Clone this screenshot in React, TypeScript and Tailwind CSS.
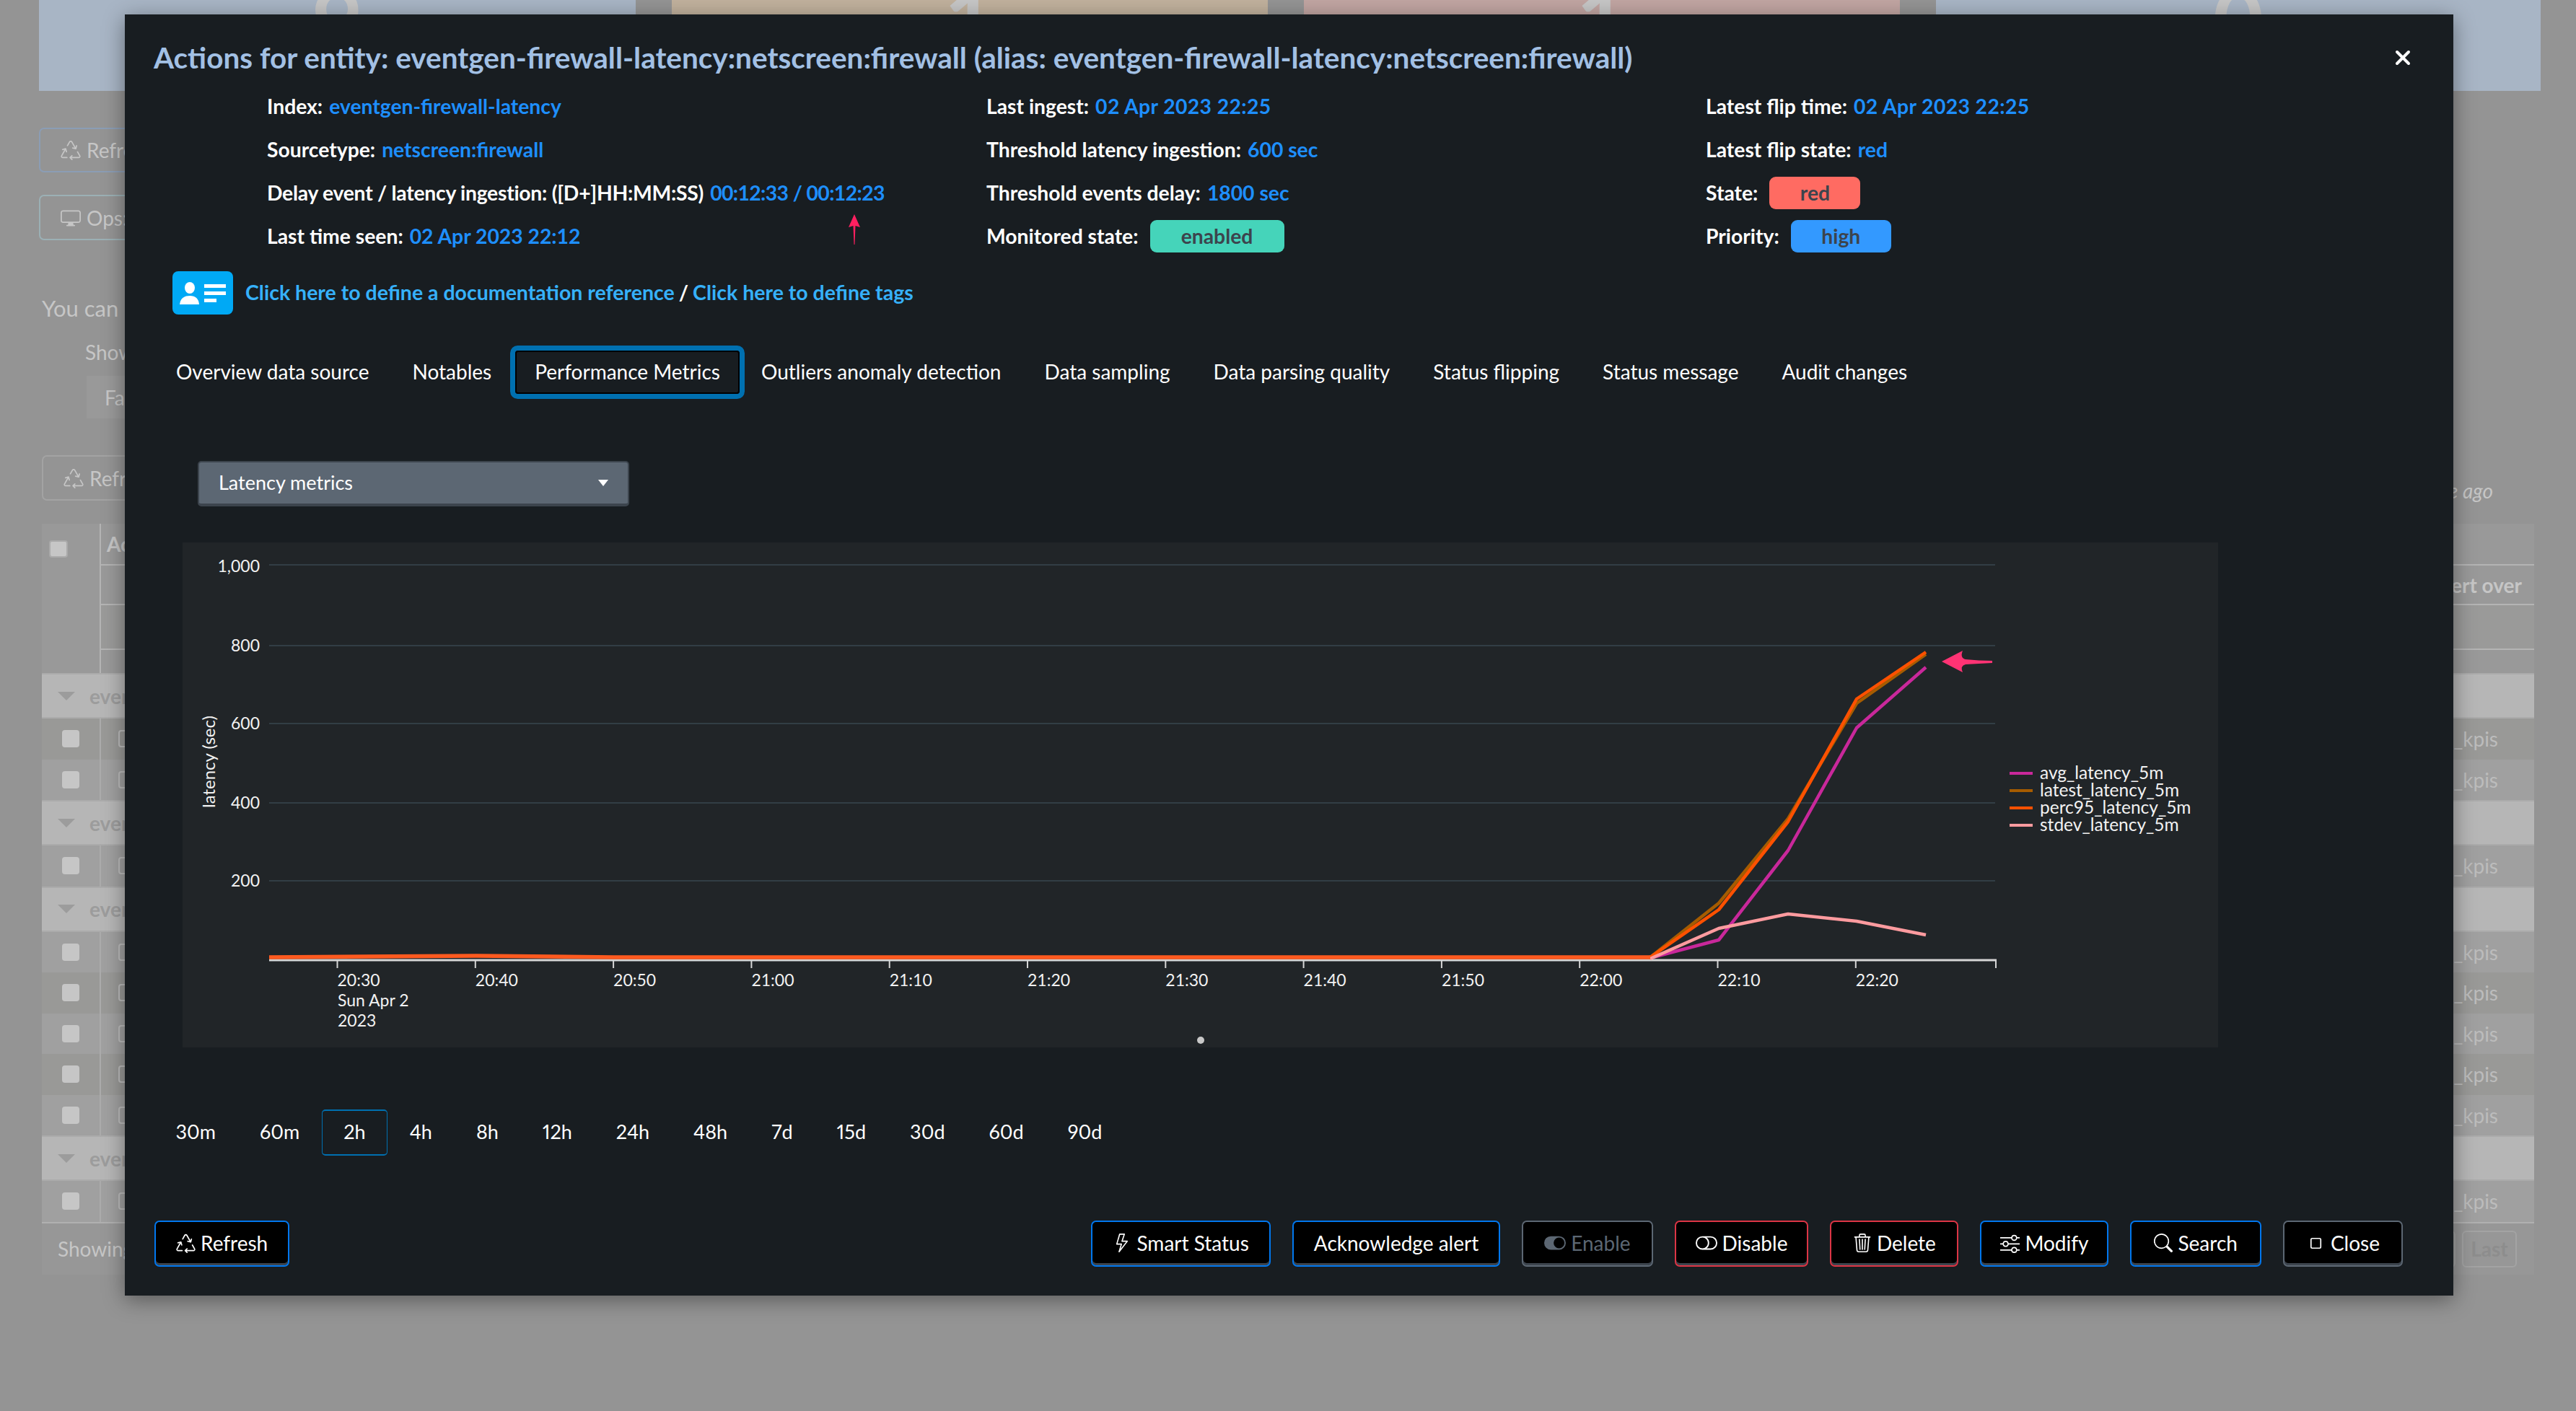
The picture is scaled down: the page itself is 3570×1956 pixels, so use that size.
import type { ReactNode } from "react"
import {
  BsDisplay,
  BsLightning,
  BsRecycle,
  BsSearch,
  BsSliders,
  BsStop,
  BsToggleOff,
  BsToggleOn,
  BsTrash3,
} from "react-icons/bs"
import { X } from "lucide-react"

const tabs = [
  "Overview data source",
  "Notables",
  "Performance Metrics",
  "Outliers anomaly detection",
  "Data sampling",
  "Data parsing quality",
  "Status flipping",
  "Status message",
  "Audit changes",
]

const ranges = ["30m", "60m", "2h", "4h", "8h", "12h", "24h", "48h", "7d", "15d", "30d", "60d", "90d"]

const cards = [
  { bg: "bg-[#a8b5c5] w-[827px]", value: "9" },
  { bg: "bg-[#c1b19d] w-[826px]", value: "1" },
  { bg: "bg-[#c1a5a2] w-[826px]", value: "1" },
  { bg: "bg-[#a8b5c5] w-[838px]", value: "0" },
]

// g = group row, d = darker row, l = lighter row
const tableRows = ["g", "d", "l", "g", "l", "g", "l", "d", "l", "d", "l", "g", "l"]

const xLabels = [
  "20:30", "20:40", "20:50", "21:00", "21:10", "21:20", "21:30", "21:40", "21:50", "22:00", "22:10", "22:20",
]

const series = [
  {
    name: "avg_latency_5m",
    color: "#c9289b",
    rise: "2287,1328 2382,1303 2478,1179 2573,1009 2669,925",
  },
  {
    name: "latest_latency_5m",
    color: "#a65c00",
    rise: "2287,1327 2382,1252 2478,1135 2573,975 2669,907",
  },
  {
    name: "perc95_latency_5m",
    color: "#ff5100",
    rise: "2287,1327 2382,1261 2478,1139 2573,969 2669,904",
  },
  {
    name: "stdev_latency_5m",
    color: "#ff9b9f",
    rise: "2287,1329 2382,1287 2478,1267 2573,1277 2669,1296",
  },
]

function Label({ name, tight, children }: { name: string; tight?: boolean; children?: ReactNode }) {
  return (
    <div className="flex h-[60px] items-center gap-[9px] pb-[2px] text-[28.3px] font-bold text-white">
      <span className={tight ? "tracking-[-0.25px]" : ""}>{name}</span>
      {children}
    </div>
  )
}

function Value({ spacing = "", children }: { spacing?: string; children: ReactNode }) {
  return <span className={`text-[#1e8fff] ${spacing}`}>{children}</span>
}

function Badge({ color, width, children }: { color: string; width: string; children: ReactNode }) {
  return (
    <span className={`ml-[7px] flex h-[45px] items-center justify-center rounded-[9px] text-[#3c444d] ${color} ${width}`}>
      {children}
    </span>
  )
}

function ActionButton({
  icon,
  tone,
  padding = "px-[28px]",
  children,
}: {
  icon?: ReactNode
  tone: string
  padding?: string
  children: ReactNode
}) {
  return (
    <button
      className={`flex h-[64px] items-center gap-[7px] rounded-[7px] border-2 bg-black pb-[2px] text-[28px] shadow-[inset_0_-3px_0_#3c444d] ${padding} ${tone}`}
    >
      {icon}
      {children}
    </button>
  )
}

function Chart() {
  return (
    <div className="h-[700px] w-[2821px] bg-[#212528]">
      <svg viewBox="253 752 2821 700" className="h-full w-full" fontFamily="Lato, sans-serif">
        {[783, 895, 1003, 1113, 1221].map((y) => (
          <line key={y} x1="373" x2="2765" y1={y} y2={y} stroke="#323e45" strokeWidth="2" />
        ))}
        {[
          ["1,000", 793],
          ["800", 903],
          ["600", 1011],
          ["400", 1121],
          ["200", 1229],
        ].map(([label, y]) => (
          <text key={label} x="360" y={y} textAnchor="end" fontSize="23" fill="#f2f2f2">
            {label}
          </text>
        ))}
        <text
          transform="translate(298 1056) rotate(-90)"
          textAnchor="middle"
          fontSize="24"
          fill="#f2f2f2"
        >
          latency (sec)
        </text>

        <line x1="373" x2="2767" y1="1331" y2="1331" stroke="#d6d6d6" strokeWidth="3" />
        {xLabels.map((label, i) => {
          const x = 467.5 + i * 191.3
          return (
            <g key={label}>
              <line x1={x} x2={x} y1="1331" y2="1342" stroke="#d6d6d6" strokeWidth="2" />
              <text x={x} y="1367" fontSize="23" fill="#f2f2f2">
                {label}
              </text>
            </g>
          )
        })}
        <line x1="2766" x2="2766" y1="1331" y2="1342" stroke="#d6d6d6" strokeWidth="2" />
        <text x="468" y="1395" fontSize="23" fill="#f2f2f2">
          Sun Apr 2
        </text>
        <text x="468" y="1423" fontSize="23" fill="#f2f2f2">
          2023
        </text>

        {series.map((s) => (
          <polyline
            key={s.name}
            points={s.rise}
            fill="none"
            stroke={s.color}
            strokeWidth="4.5"
            strokeLinejoin="round"
          />
        ))}
        <polyline
          points="373,1327 660,1325 850,1327 2287,1327"
          fill="none"
          stroke="#ff5a1f"
          strokeWidth="5.5"
        />

        {series.map((s, i) => (
          <g key={s.name}>
            <rect x="2785" y={1070 + i * 24} width="32" height="4" fill={s.color} />
            <text x="2827" y={1080 + i * 24} fontSize="24.5" fill="#f2f2f2">
              {s.name}
            </text>
          </g>
        ))}

        <path d="M2691 917 L2720 902 Q2716 912 2724 914 Q2742 916 2761 916 L2761 919 Q2742 920 2724 921 Q2716 923 2720 932 Z" fill="#ff3374" />
        <circle cx="1664" cy="1442" r="5" fill="#c8c8c8" />
      </svg>
    </div>
  )
}

function Backdrop() {
  return (
    <div className="text-[28px] text-[#c6c6c6]">
      <div className="flex h-[126px] gap-[50px] pl-[54px]">
        {cards.map((card, i) => (
          <div
            key={i}
            className={`flex justify-center overflow-hidden text-[122px] font-bold leading-none ${card.bg}`}
          >
            <span className="-mt-[34px]">{card.value}</span>
          </div>
        ))}
      </div>

      <div className="ml-[54px] mt-[51px] flex h-[62px] w-[400px] items-center gap-[8px] rounded-[7px] border-2 border-[#8b9db5] pl-[28px]">
        <BsRecycle className="text-[28px]" />
        Refresh
      </div>
      <div className="ml-[54px] mt-[31px] flex h-[63px] w-[400px] items-center gap-[8px] rounded-[7px] border-2 border-[#9bb0b5] pl-[28px]">
        <BsDisplay className="text-[28px]" />
        Ops: status
      </div>

      <p className="ml-[58px] mt-[75px] h-[38px] text-[31px] leading-[38px]">You can use filters</p>
      <p className="ml-[118px] mt-[24px] h-[36px] leading-[36px]">Show only</p>
      <div className="ml-[120px] mt-[15px] flex h-[59px] w-[300px] items-center bg-[#999999] pl-[25px]">Failed</div>

      <div className="ml-[58px] mt-[51px] flex items-center justify-between pr-[115px]">
        <div className="flex h-[63px] w-[400px] items-center gap-[8px] rounded-[7px] border-2 border-[#a3a3a3] pl-[28px]">
          <BsRecycle className="text-[28px]" />
          Refresh
        </div>
        <span className="mt-[34px] italic leading-none">last updated 1 minute ago</span>
      </div>

      <div className="ml-[58px] mt-[32px] w-[3454px]">
        <div className="flex h-[207px] bg-[#999999]">
          <div className="w-[80px] pl-[10px] pt-[23px]">
            <div className="h-[24px] w-[26px] rounded-[4px] border-2 border-[#aaaaaa] bg-[#c6c6c6]" />
          </div>
          <div className="flex-1 border-l-2 border-[#b4b4b4]">
            <div className="flex h-[58px] items-center border-b-2 border-[#b4b4b4] pl-[8px] font-bold">Actions</div>
            <div className="flex h-[55px] items-center justify-end border-b-2 border-[#b4b4b4] pr-[17px] font-bold">
              Alert over
            </div>
            <div className="h-[62px] border-b-2 border-[#b4b4b4] bg-[#9a9a99]" />
          </div>
        </div>

        {tableRows.map((kind, i) =>
          kind === "g" ? (
            <div key={i} className="flex h-[63px] items-center border-y-2 border-[#ababab] bg-[#b6b6b6] pl-[22px]">
              <span className="h-0 w-0 border-x-[12px] border-t-[12px] border-x-transparent border-t-[#9c9c9c]" />
              <span className="ml-[20px] font-bold text-[#9c9c9c]">eventgen-firewall</span>
            </div>
          ) : (
            <div key={i} className={`flex h-[56.5px] items-center ${kind === "d" ? "bg-[#999997]" : "bg-[#a0a0a0]"}`}>
              <div className="flex h-full w-[80px] items-center justify-center">
                <div className="h-[24px] w-[24px] rounded-[4px] bg-[#c6c6c6]" />
              </div>
              <div className="flex h-full flex-1 items-center justify-between border-l-2 border-[#ababab] pl-[24px] pr-[50px]">
                <div className="h-[24px] w-[26px] rounded-[4px] border-2 border-[#bcbcbc]" />
                <span className="text-[#bcbcbc]">trackme__kpis</span>
              </div>
            </div>
          ),
        )}

        <div className="flex h-[73px] items-center justify-between border-t-2 border-[#b0b0b0] bg-[#979797] pl-[22px] pr-[24px]">
          <span>Showing 1 to 10 of 10 entries</span>
          <div className="flex items-center gap-[9px] text-[#8d8d8d]">
            <div className="flex h-[51px] w-[76px] items-center justify-center rounded-[6px] border-2 border-[#a3a3a3]">1</div>
            <div className="flex h-[51px] w-[76px] items-center justify-center rounded-[6px] border-2 border-[#a3a3a3] font-bold">
              Last
            </div>
          </div>
        </div>
      </div>
    </div>
  )
}

export default function App() {
  return (
    <div className="relative h-[1956px] w-[3570px] overflow-hidden bg-[#949494] font-[Lato,sans-serif]">
      <Backdrop />

      <div className="absolute left-[173px] top-[20px] h-[1776px] w-[3227px] bg-[#181d21] pt-[40px] text-white shadow-[0_6px_28px_rgba(0,0,0,0.4)]">
        <div className="flex h-[40px] items-center justify-between pl-[40px] pr-[54px]">
          <h1 className="whitespace-nowrap text-[40.5px] font-bold leading-[40px] text-[#a2c0e4]">
            Actions for entity: eventgen-firewall-latency:netscreen:firewall (alias: eventgen-firewall-latency:netscreen:firewall)
          </h1>
          <X className="h-[32px] w-[32px] text-white" strokeWidth={3} />
        </div>

        <div className="ml-[197px] mt-[18px] grid w-[2991px] grid-cols-3">
          <Label name="Index:">
            <Value>eventgen-firewall-latency</Value>
          </Label>
          <Label name="Last ingest:">
            <Value spacing="tracking-[0.4px]">02 Apr 2023 22:25</Value>
          </Label>
          <Label name="Latest flip time:">
            <Value spacing="tracking-[0.4px]">02 Apr 2023 22:25</Value>
          </Label>
          <Label name="Sourcetype:">
            <Value>netscreen:firewall</Value>
          </Label>
          <Label name="Threshold latency ingestion:">
            <Value>600 sec</Value>
          </Label>
          <Label name="Latest flip state:">
            <Value>red</Value>
          </Label>
          <Label name="Delay event / latency ingestion: ([D+]HH:MM:SS)" tight>
            <Value spacing="tracking-[-0.6px]">00:12:33 / 00:12:23</Value>
          </Label>
          <Label name="Threshold events delay:">
            <Value>1800 sec</Value>
          </Label>
          <Label name="State:">
            <Badge color="bg-[#ff6b62]" width="w-[126px]">
              red
            </Badge>
          </Label>
          <div className="relative">
            <Label name="Last time seen:">
              <Value>02 Apr 2023 22:12</Value>
            </Label>
            <svg className="absolute left-[804px] -top-[1px] h-[43px] w-[20px]" viewBox="0 0 20 43">
              <path d="M10 0 L18 18 L11.5 16 L10.5 42 L9.5 42 L8.5 16 L2 18 Z" fill="#ff2060" />
            </svg>
          </div>
          <Label name="Monitored state:">
            <Badge color="bg-[#45d4ba]" width="w-[186px]">
              enabled
            </Badge>
          </Label>
          <Label name="Priority:">
            <Badge color="bg-[#3399ff]" width="w-[139px]">
              high
            </Badge>
          </Label>
        </div>

        <div className="ml-[66px] mt-[18px] flex h-[60px] items-center gap-[17px] text-[28.5px] font-bold">
          <svg className="h-[60px] w-[84px]" viewBox="0 0 84 60">
            <rect width="84" height="60" rx="8" fill="#00a9f5" />
            <ellipse cx="24" cy="23" rx="7" ry="8" fill="#ffffff" />
            <path d="M10 46 Q11 34 24 34 Q36 34 37 46 Z" fill="#ffffff" />
            <rect x="44" y="18" width="30" height="5" fill="#ffffff" />
            <rect x="44" y="28" width="30" height="5" fill="#ffffff" />
            <rect x="44" y="38" width="17" height="5" fill="#ffffff" />
          </svg>
          <div className="flex gap-[6px] pb-[2px]">
            <span className="text-[#36b1fa]">Click here to define a documentation reference</span>
            <span>/</span>
            <span className="text-[#36b1fa]">Click here to define tags</span>
          </div>
        </div>

        <div className="ml-[41px] mt-[50px] flex text-[28px]">
          {tabs.map((tab) =>
            tab === "Performance Metrics" ? (
              <div
                key={tab}
                className="ml-[3px] flex h-[60px] items-center rounded-[4px] border-2 border-black px-[25px] pb-[2px] shadow-[0_0_0_7px_#0070b0]"
              >
                {tab}
              </div>
            ) : (
              <div key={tab} className="flex h-[60px] items-center px-[30px] pb-[2px]">
                {tab}
              </div>
            ),
          )}
        </div>

        <div className="ml-[101px] mt-[93px] flex h-[63px] w-[598px] items-center justify-between rounded-[5px] border-2 border-b-4 border-[#3c444d] bg-[#5c6773] pl-[27px] pr-[27px] text-[27px]">
          Latency metrics
          <span className="h-0 w-0 border-x-[7px] border-t-[9px] border-x-transparent border-t-white" />
        </div>

        <div className="ml-[80px] mt-[50px]">
          <Chart />
        </div>

        <div className="ml-[40px] mt-[86px] flex text-[27px] proportional-nums">
          {ranges.map((range) =>
            range === "2h" ? (
              <div
                key={range}
                className="flex h-[64px] items-center rounded-[5px] border border-y-2 border-[#0070b0] px-[29.5px] pb-[2px]"
              >
                {range}
              </div>
            ) : (
              <div key={range} className="flex h-[64px] items-center px-[30.5px] pb-[2px]">
                {range}
              </div>
            ),
          )}
        </div>

        <div className="ml-[41px] mr-[70px] mt-[90px] flex items-center justify-between">
          <ActionButton icon={<BsRecycle className="text-[27px]" />} tone="border-[#0077ee]">
            Refresh
          </ActionButton>
          <div className="flex gap-[30px]">
            <ActionButton icon={<BsLightning className="text-[26px]" />} tone="border-[#0077ee]">
              Smart Status
            </ActionButton>
            <ActionButton tone="border-[#0077ee]">Acknowledge alert</ActionButton>
            <ActionButton
              icon={<BsToggleOn className="text-[30px]" />}
              tone="border-[#5c6773] text-[#5c6773]"
              padding="px-[29px]"
            >
              Enable
            </ActionButton>
            <ActionButton
              icon={<BsToggleOff className="text-[30px]" />}
              tone="border-[#dc3545]"
              padding="px-[27px]"
            >
              Disable
            </ActionButton>
            <ActionButton
              icon={<BsTrash3 className="text-[26px]" />}
              tone="border-[#dc3545]"
              padding="px-[29.5px]"
            >
              Delete
            </ActionButton>
            <ActionButton
              icon={<BsSliders className="text-[27px]" />}
              tone="border-[#0077ee]"
              padding="px-[26px]"
            >
              Modify
            </ActionButton>
            <ActionButton
              icon={<BsSearch className="text-[26px]" />}
              tone="border-[#0077ee]"
              padding="px-[31px]"
            >
              Search
            </ActionButton>
            <ActionButton
              icon={<BsStop className="text-[27px]" />}
              tone="border-[#5c6773]"
              padding="px-[30px]"
            >
              Close
            </ActionButton>
          </div>
        </div>
      </div>
    </div>
  )
}
